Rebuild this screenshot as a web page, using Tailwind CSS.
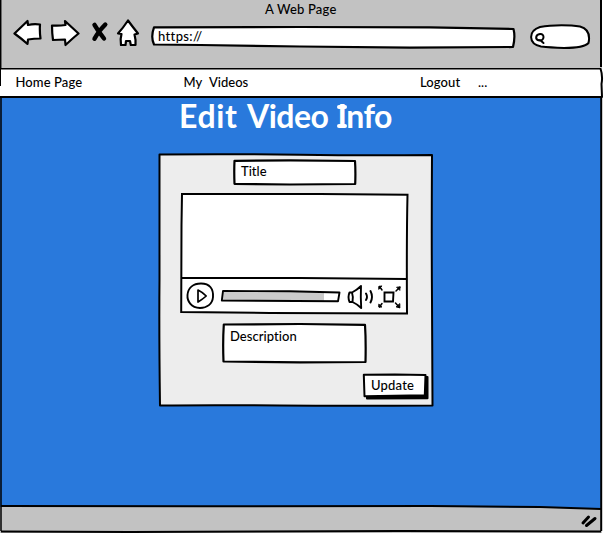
<!DOCTYPE html>
<html lang="en">
<head>
<meta charset="utf-8">
<title>A Web Page</title>
<script src="https://cdn.jsdelivr.net/npm/@tailwindcss/browser@4"></script>
</head>
<body class="w-[604px] h-[533px] overflow-hidden bg-white font-[Lato,sans-serif] font-medium text-[13px] leading-4 text-black">
<main class="relative flex flex-col w-[604px] h-[533px]">
  <header class="h-[68px] w-[602px] bg-[#c2c2c2] flex flex-col">
    <h1 class="h-[18px] pt-px pl-[265px] tracking-[0.2px] whitespace-nowrap">A Web Page</h1>
    <div class="flex h-[32px] pl-[13px] items-start">
      <svg class="w-[30px] h-[32px] shrink-0" viewBox="13 18 30 32" fill="#fff" stroke="#000" stroke-width="2.200" stroke-linejoin="round"><path d="M14.500 33.500 L27.500 21 L28 25 Q34 23.500 40 24.500 Q39.500 31 40.500 38.500 Q34 38.500 28 39.500 L27.500 44 Q22 39 14.500 33.500Z"/></svg>
      <svg class="w-[30px] h-[32px] shrink-0 ml-[7px]" viewBox="50 18 30 32" fill="#fff" stroke="#000" stroke-width="2.200" stroke-linejoin="round"><path d="M52 25.500 Q59 26 65.500 25 L65 21 L78.500 33.500 Q73 38 65.500 45 L65 39.500 L53 40 Q52 33 52 25.500Z"/></svg>
      <svg class="w-[20px] h-[32px] shrink-0 ml-[10px]" viewBox="90 18 20 32" stroke="#000" stroke-width="4.400" stroke-linecap="round" fill="none"><path d="M94.500 24.800 Q98 31 104 38.500 M105.300 24.500 Q98 32 94.500 38.800"/></svg>
      <svg class="w-[26px] h-[32px] shrink-0 ml-[5px]" viewBox="115 18 26 32" fill="#fff" stroke="#000" stroke-width="2.200" stroke-linejoin="round"><path d="M128 20.500 Q132 26 138 33.500 L134.500 34.500 Q136 40 135.500 45 L130.800 45 L130 41 L126 41 L125.500 45 L121 45 Q120 39 121.500 34 L118 33.500 Q123 28 128 20.500Z"/></svg>
      <div class="relative w-[367px] h-[32px] shrink-0 ml-[9px] pl-[8px] pt-[10px]">
        <svg class="absolute inset-0" width="367" height="32" viewBox="150 18 367 32" fill="#fff" stroke="#000" stroke-width="2.200" stroke-linejoin="round"><path d="M154 27.300 L300 27 L430 27.300 L513.500 29 Q515.500 37 513 47 L410 47.600 L300 46.500 L200 45 L154 44.500 Q150.500 37 154 27.300Z"/></svg>
        <span class="relative tracking-[0.350px]">https://</span>
      </div>
      <svg class="w-[62px] h-[34px] shrink-0 ml-[12px]" viewBox="529 18 62 34" fill="#fff" stroke="#000" stroke-width="2" stroke-linecap="round"><path d="M540 27 C553 24.500 571 25 580 26.500 C589 29 590 36 588.500 43 C585 47 572 48 564 48 Q550 47.500 541 46.500 C528 44 528 31 540 27Z"/><path fill="none" d="M540 34 C545 33.500 544.500 41 539.500 40.500 C534.500 39.500 535.500 34.500 540 34Z M540 40 L543.500 43"/></svg>
    </div>
  </header>

  <nav class="relative h-[30px] w-[603px] bg-white flex items-center pl-[15.500px] pb-[2px] whitespace-nowrap">
    <svg class="absolute inset-0" width="604" height="30" viewBox="0 68 604 30" fill="none" stroke="#000" stroke-width="2" stroke-linejoin="round"><path d="M0 68.500 H600.500 Q603 76 601.500 84 L602 97 H0"/><path d="M0.500 69 V86" stroke-width="1"/></svg>
    <a class="w-[168px] tracking-[0.1px]">Home Page</a>
    <a class="w-[25.500px]">My</a>
    <a class="w-[211px]">Videos</a>
    <a class="w-[58px] tracking-[0.1px]">Logout</a>
    <a>...</a>
  </nav>

  <section class="h-[409px] w-[602px] bg-[#2979dc] flex flex-col">
    <h2 class="flex h-[55px] pl-[179px] text-white text-[32px] leading-[36px] font-bold whitespace-nowrap"><span class="w-[68px] tracking-[0.6px]">Edit&nbsp;</span><span class="w-[88.500px] tracking-[-0.5px]">Video&nbsp;</span><span class="relative tracking-[-0.5px] pl-[2px] before:absolute before:left-[1px] before:top-[7px] before:w-[10px] before:h-[4px] before:rounded-full before:bg-white after:absolute after:left-[1px] after:top-[26px] after:w-[10px] after:h-[4px] after:rounded-full after:bg-white">Info</span></h2>
    <div class="relative w-[276px] h-[256px] ml-[158px] flex flex-col">
      <svg class="absolute inset-0" width="276" height="256" viewBox="158 153 276 256" fill="#ededed" stroke="#000" stroke-width="2" stroke-linejoin="round"><path d="M159.500 154.500 Q230 153.800 300 154.800 T432 155 Q431.500 240 432 300 L432.500 405.500 Q350 406 280 405.500 T160 405.500 Q159 330 159.500 280Z"/></svg>

      <div class="relative w-[124px] h-[28px] ml-[75px] mt-[5px] pl-[8px] pt-[5px]">
        <svg class="absolute inset-0" width="124" height="28" viewBox="233 158 124 28" fill="#fff" stroke="#000" stroke-width="2.200" stroke-linejoin="round"><path d="M234.500 160.800 L290 160.300 L355 161 Q355.700 171 355.200 184 L290 184.500 L234.500 183.800Q234 171 234.500 160.800Z"/></svg>
        <span class="relative">Title</span>
      </div>

      <figure class="relative w-[230px] h-[123px] ml-[22px] mt-[6px] flex flex-col justify-end">
        <svg class="absolute inset-0" width="230" height="123" viewBox="180 192 230 123" fill="#fff" stroke="#000" stroke-width="2" stroke-linejoin="miter"><path d="M182 194 L320 194 L407.500 194.800 Q406.500 240 407 313.500 L270 313 L181.200 312 L181.500 225 Z"/><path d="M182 278 L300 278 L407 279"/></svg>
        <div class="relative flex items-center h-[38px] pl-[6px] pb-px">
          <svg class="w-[29px] h-[34px]" viewBox="186 278 29 34" fill="none" stroke="#000" stroke-width="1.900" stroke-linejoin="round"><path d="M201 282.500 C210 282.500 213.500 288 213 296 C212.500 303 207 307 200 307 C191 306.500 187 300 187.500 294 C188 287 193 282.500 201 282.500Z"/><path stroke-width="1.700" d="M198 289 Q203 291.500 206.200 295 Q203 298 198 301Z"/></svg>
          <svg class="w-[121px] h-[34px] ml-[5px]" viewBox="220 278 121 34" stroke="#000" stroke-width="1.900" stroke-linejoin="round"><path fill="#fff" stroke="none" d="M223 290 L290 290.200 L339.500 292 L338 300 L221.800 299.300Z"/><path fill="#cacaca" stroke="none" d="M223 290 L324 291.200 V299.700 L222 299.500Z"/><path fill="none" d="M223 290 L290 290.300 L339.500 291.500 L338 300.300 L221.800 299.500Z"/></svg>
          <svg class="w-[28px] h-[34px] ml-[5px]" viewBox="346 278 28 34" fill="none" stroke="#000" stroke-width="1.900" stroke-linejoin="round" stroke-linecap="round"><path d="M352 291.500 H349.500 Q347.500 296 349.500 301 H352.500 Q353.500 296 352 291.500 Q357 289 361 285 Q360.500 296 361.200 307 Q357 303 352.500 301"/><path d="M366 292.500 Q368 296 366 299 M370.500 290 Q373.500 296 370.500 301.500"/></svg>
          <svg class="w-[26px] h-[34px] ml-[3px]" viewBox="377 278 26 34" fill="none" stroke="#000" stroke-width="1.900" stroke-linecap="round"><path d="M384.500 291.500 H393.500 L393 300.500 H384.500Z"/><path stroke-width="1.500" d="M379.500 285.500 L382 289 M396 290 L400 286 M379.500 306 L382 302.500 M395.500 302 L399.500 306.500"/><path fill="#000" stroke-width="1" d="M378.800 288 V285.500 L381.500 285Z M397 286.200 L400 286 L399.800 289Z M378.800 303.500 V306 L381.500 306Z M396.500 306 L399.800 306.700 V303Z"/></svg>
        </div>
      </figure>

      <div class="relative w-[146px] h-[42px] ml-[64px] mt-[7px] pl-[8px] pt-[6px]">
        <svg class="absolute inset-0" width="146" height="42" viewBox="222 322 146 42" fill="#fff" stroke="#000" stroke-width="2.200" stroke-linejoin="round"><path d="M223.800 324.500 L300 324 L365 324.800 Q366 340 365.500 362 L300 362.300 L223.500 361.500 Q222.700 342 223.800 324.500Z"/></svg>
        <span class="relative tracking-[0.050px]">Description</span>
      </div>

      <button class="relative w-[67px] h-[28px] ml-[204px] mt-[9px] pl-[9px] pb-[4px] text-left">
        <svg class="absolute inset-0" width="67" height="28" viewBox="362 373 67 28" fill="#fff" stroke="#000" stroke-width="2" stroke-linejoin="round"><path fill="#000" d="M367 377 H427.500 V398.300 L367 398.500Z"/><path d="M363.800 374.800 L395 374.500 L425.500 375 L424.800 395.300 L364.500 396.200Z"/></svg>
        <span class="relative tracking-[0.2px]">Update</span>
      </button>
    </div>
  </section>

  <footer class="h-[26px] w-[602px] bg-[#c2c2c2]">
    <svg class="relative -top-[3px]" width="604" height="29" viewBox="0 504 604 29" fill="none" stroke="#000" stroke-width="2"><path fill="#2979dc" stroke="none" d="M420 504 H601 V508.500 L420 506.500Z"/><path d="M1 506 L200 506.300 L430 506 L540 507 L601 509"/><path d="M1 531.500 L130 532 L400 531 L601 531.500"/><path stroke-width="3" stroke-linecap="round" d="M583 523 L588.500 517 M586.500 525.500 L595 518.500"/></svg>
  </footer>
  <svg class="absolute inset-0 pointer-events-none" width="604" height="533" fill="none" stroke="#000"><path stroke-width="1.500" d="M0.700 0 V68 M1 98 V531"/><path stroke-width="2" d="M601 0 V67 M601.200 98 V531"/></svg>
</main>
</body>
</html>
